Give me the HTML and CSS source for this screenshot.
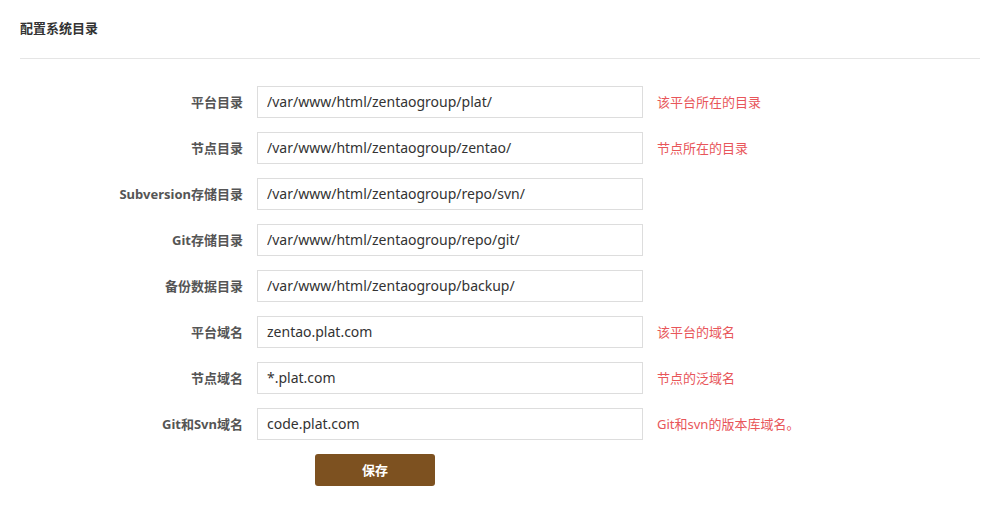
FILE: index.html
```html
<!DOCTYPE html>
<html lang="zh-CN">
<head>
    <meta charset="UTF-8">
    <meta name="viewport" content="width=device-width, initial-scale=1.0">
    <title>配置系统目录</title>
    <link rel="stylesheet" href="styles.css">
</head>
<body>
    <div class="panel">
        <div class="panel-title">配置系统目录</div>

        <form class="config-form">
            <div class="row">
                <label>平台目录</label>
                <input type="text" value="/var/www/html/zentaogroup/plat/">
                <span class="hint">该平台所在的目录</span>
            </div>
            <div class="row">
                <label>节点目录</label>
                <input type="text" value="/var/www/html/zentaogroup/zentao/">
                <span class="hint">节点所在的目录</span>
            </div>
            <div class="row">
                <label>Subversion存储目录</label>
                <input type="text" value="/var/www/html/zentaogroup/repo/svn/">
                <span class="hint"></span>
            </div>
            <div class="row">
                <label>Git存储目录</label>
                <input type="text" value="/var/www/html/zentaogroup/repo/git/">
                <span class="hint"></span>
            </div>
            <div class="row">
                <label>备份数据目录</label>
                <input type="text" value="/var/www/html/zentaogroup/backup/">
                <span class="hint"></span>
            </div>
            <div class="row">
                <label>平台域名</label>
                <input type="text" value="zentao.plat.com">
                <span class="hint">该平台的域名</span>
            </div>
            <div class="row">
                <label>节点域名</label>
                <input type="text" value="*.plat.com">
                <span class="hint">节点的泛域名</span>
            </div>
            <div class="row">
                <label>Git和Svn域名</label>
                <input type="text" value="code.plat.com">
                <span class="hint">Git和svn的版本库域名。</span>
            </div>
            <div class="actions">
                <button type="submit">保存</button>
            </div>
        </form>
    </div>
</body>
</html>
```

FILE: styles.css
```css
body {
    margin: 0;
    padding: 0;
    background-color: #fff;
    font-family: "Noto Sans", "Noto Sans CJK SC", sans-serif;
    font-size: 13px;
    color: #333;
}

.panel {
    padding: 0 20px;
}

.panel-title {
    height: 58px;
    line-height: 56px;
    font-weight: bold;
    color: #333;
    border-bottom: 1px solid #e5e5e5;
}

.config-form {
    padding-top: 27px;
}

.row {
    display: grid;
    grid-template-columns: 223px 386px 1fr;
    column-gap: 14px;
    align-items: center;
    margin-bottom: 14px;
}

.row label {
    padding-bottom: 2px;
    text-align: right;
    font-weight: bold;
    color: #555;
}

.row input {
    box-sizing: border-box;
    height: 32px;
    padding: 0 9px 2px;
    border: 1px solid #ddd;
    font-family: inherit;
    font-size: 14px;
    color: #333;
    outline: none;
}

.hint {
    padding-bottom: 2px;
    color: #e8565a;
}

.actions {
    padding-left: 295px;
}

.actions button {
    width: 120px;
    height: 32px;
    padding-bottom: 2px;
    border: none;
    border-radius: 3px;
    background-color: #7d5120;
    color: #fff;
    font-family: inherit;
    font-size: 13px;
    font-weight: bold;
    cursor: pointer;
}
```
